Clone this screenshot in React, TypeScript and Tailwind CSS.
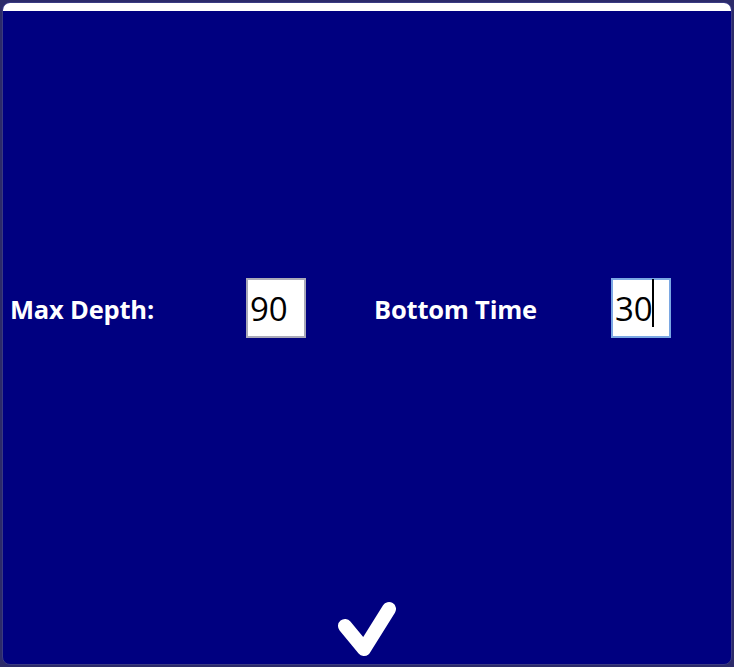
export default function App() {
  return (
    <div className="w-[734px] h-[667px] bg-[#2c2b6a] p-[2px]" style={{ fontFamily: '"Open Sans", "Noto Sans", sans-serif' }}>
      <div className="relative flex h-full flex-col overflow-hidden rounded-[8px] border border-[#3a3a82] bg-[#000080]">
        {/* title strip */}
        <div className="h-[8px] shrink-0 bg-white" />

        <div className="flex flex-1 items-center">
          <div className="grid w-full grid-cols-2 pt-[4px]">
            <div className="flex items-center pl-[7px]">
              <span className="w-[236px] pt-[3px] text-[25.5px] font-bold tracking-[-0.2px] text-white">Max Depth:</span>
              <input
                defaultValue="90"
                className="h-[60px] w-[60px] border-2 border-[#a9a9b8] bg-white px-[2px] text-[33px] text-black outline-none"
              />
            </div>
            <div className="flex items-center pl-[7px]">
              <span className="w-[237px] pt-[3px] text-[25.5px] font-bold tracking-[-0.2px] text-white">Bottom Time</span>
              <div className="relative">
                <input
                  defaultValue="30"
                  className="h-[60px] w-[60px] border-2 border-[#7aa7e3] bg-white px-[2px] text-[33px] text-black caret-transparent outline-none"
                />
                <span className="absolute left-[41px] top-[1px] h-[48px] w-[2px] bg-black" />
              </div>
            </div>
          </div>
        </div>

        <div className="flex shrink-0 justify-center pb-[5px]">
          <svg width="64" height="58" viewBox="0 0 64 58" className="ml-[2px]">
            <path d="M9 25 L28 48 L53 8" fill="none" stroke="white" strokeWidth="14" strokeLinecap="round" strokeLinejoin="round" />
          </svg>
        </div>
      </div>
    </div>
  );
}
